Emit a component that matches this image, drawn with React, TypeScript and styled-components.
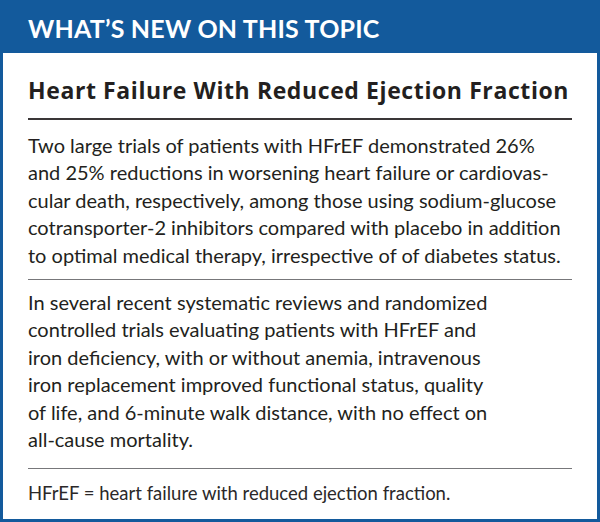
import React from 'react';
import styled, { createGlobalStyle } from 'styled-components';

const GlobalStyle = createGlobalStyle`
  html, body {
    margin: 0;
    padding: 0;
    background: #ffffff;
  }
  body {
    font-family: Lato, "Open Sans", "Liberation Sans", sans-serif;
  }
`;

const Frame = styled.div`
  width: 600px;
  height: 522px;
  box-sizing: border-box;
  border: 3px solid #135a9c;
  display: flex;
  flex-direction: column;
  background: #ffffff;
`;

const Banner = styled.div`
  height: 50px;
  background: #135a9c;
  display: flex;
  align-items: center;
  padding: 0 25px;
`;

const BannerTitle = styled.h1`
  margin: 0;
  color: #ffffff;
  font-size: 25px;
  font-weight: 700;
  letter-spacing: 0.2px;
`;

const Body = styled.div`
  padding: 0 25px;
  display: flex;
  flex-direction: column;
`;

const Heading = styled.h2`
  margin: 0;
  padding: 21px 0 12px;
  font-family: "Open Sans", Lato, sans-serif;
  font-size: 23px;
  font-weight: 700;
  letter-spacing: 0.6px;
  color: #231f20;
  border-bottom: 2.5px solid #3a3637;
`;

const Section = styled.div<{ $top: number; $bottom: number; $last?: boolean }>`
  padding: ${(p) => `${p.$top}px 0 ${p.$bottom}px`};
  border-bottom: ${(p) => (p.$last ? 'none' : '1.5px solid #77777a')};
`;

const Para = styled.p`
  margin: 0;
  font-size: 20px;
  line-height: 27.4px;
  color: #231f20;
`;

const Line = styled.span`
  display: block;
  white-space: nowrap;
`;

const Note = styled.p`
  margin: 0;
  font-size: 18.5px;
  line-height: 24px;
  color: #2b2829;
`;

const first = [
  'Two large trials of patients with HFrEF demonstrated 26%',
  'and 25% reductions in worsening heart failure or cardiovas-',
  'cular death, respectively, among those using sodium-glucose',
  'cotransporter-2 inhibitors compared with placebo in addition',
  'to optimal medical therapy, irrespective of of diabetes status.',
];

const second = [
  'In several recent systematic reviews and randomized',
  'controlled trials evaluating patients with HFrEF and',
  'iron deficiency, with or without anemia, intravenous',
  'iron replacement improved functional status, quality',
  'of life, and 6-minute walk distance, with no effect on',
  'all-cause mortality.',
];

const App: React.FC = () => (
  <>
    <GlobalStyle />
    <Frame>
      <Banner>
        <BannerTitle>WHAT’S NEW ON THIS TOPIC</BannerTitle>
      </Banner>
      <Body>
        <Heading>Heart Failure With Reduced Ejection Fraction</Heading>
        <Section $top={12} $bottom={10}>
          <Para>
            {first.map((l) => (
              <Line key={l}>{l}</Line>
            ))}
          </Para>
        </Section>
        <Section $top={9} $bottom={15}>
          <Para>
            {second.map((l) => (
              <Line key={l}>{l}</Line>
            ))}
          </Para>
        </Section>
        <Section $top={12} $bottom={0} $last>
          <Note>HFrEF = heart failure with reduced ejection fraction.</Note>
        </Section>
      </Body>
    </Frame>
  </>
);

export default App;
